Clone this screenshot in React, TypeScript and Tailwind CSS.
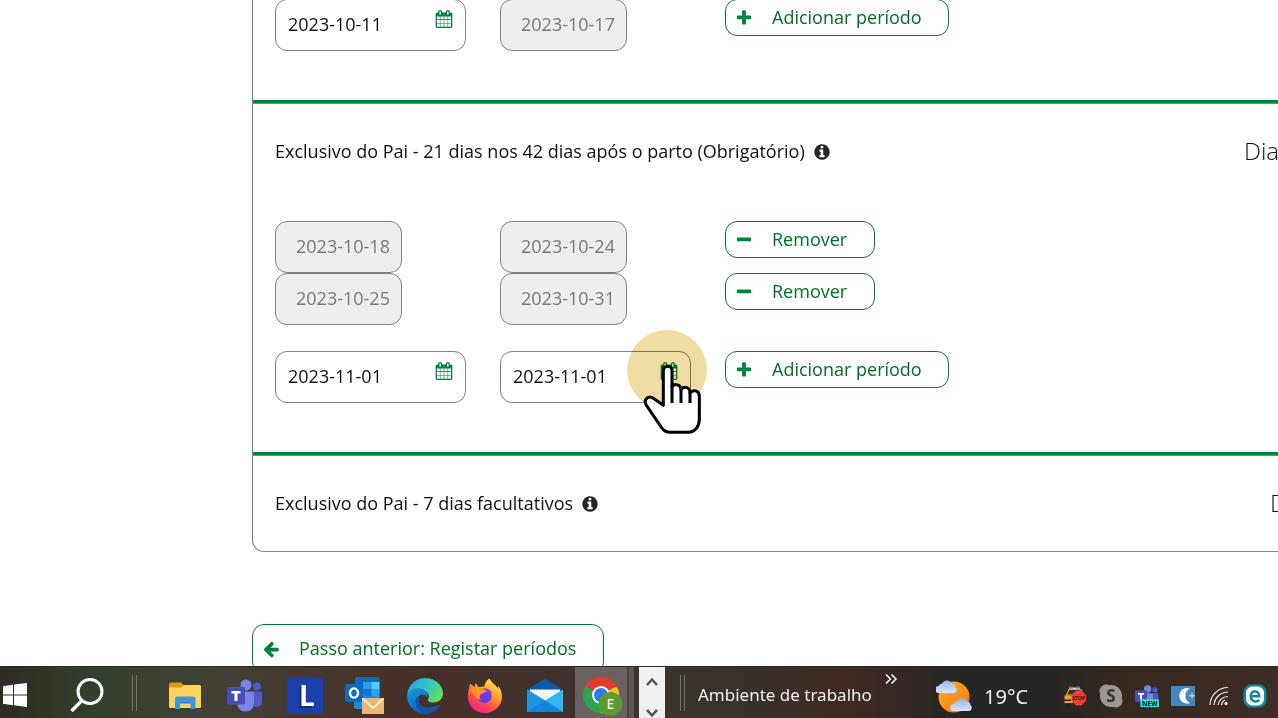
import type { ReactNode } from 'react'

const glyphs = {
  plus: 'M1600 736v192q0 40-28 68t-68 28h-416v416q0 40-28 68t-68 28h-192q-40 0-68-28t-28-68v-416h-416q-40 0-68-28t-28-68v-192q0-40 28-68t68-28h416v-416q0-40 28-68t68-28h192q40 0 68 28t28 68v416h416q40 0 68 28t28 68z',
  minus: 'M1600 736v192q0 40-28 68t-68 28h-1216q-40 0-68-28t-28-68v-192q0-40 28-68t68-28h1216q40 0 68 28t28 68z',
  arrowLeft:
    'M1664 896v128q0 53-32.5 90.5t-84.5 37.5h-704l293 294q38 36 38 90t-38 90l-75 76q-37 37-90 37-52 0-91-37l-651-652q-37-37-37-90 0-52 37-91l651-650q38-38 91-38 52 0 90 38l75 74q38 38 38 91t-38 91l-293 293h704q52 0 84.5 37.5t32.5 90.5z',
  info: 'M1152 1376v-160q0-14-9-23t-23-9h-96v-512q0-14-9-23t-23-9h-320q-14 0-23 9t-9 23v160q0 14 9 23t23 9h96v320h-96q-14 0-23 9t-9 23v160q0 14 9 23t23 9h448q14 0 23-9t9-23zm-128-896v-160q0-14-9-23t-23-9h-192q-14 0-23 9t-9 23v160q0 14 9 23t23 9h192q14 0 23-9t9-23zm640 416q0 209-103 385.5t-279.5 279.5-385.5 103-385.5-103-279.5-279.5-103-385.5 103-385.5 279.5-279.5 385.5-103 385.5 103 279.5 279.5 103 385.5z',
  calendar:
    'M192 1664h288v-288h-288v288zm352 0h320v-288h-320v288zm-352-352h288v-320h-288v320zm352 0h320v-320h-320v320zm-352-384h288v-288h-288v288zm736 736h320v-288h-320v288zm-384-736h320v-288h-320v288zm768 736h288v-288h-288v288zm-384-352h320v-320h-320v320zm-352-864v-288q0-13-9.5-22.5t-22.5-9.5h-64q-13 0-22.5 9.5t-9.5 22.5v288q0 13 9.5 22.5t22.5 9.5h64q13 0 22.5-9.5t9.5-22.5zm736 864h288v-320h-288v320zm-384-384h320v-288h-320v288zm384 0h288v-288h-288v288zm32-480v-288q0-13-9.5-22.5t-22.5-9.5h-64q-13 0-22.5 9.5t-9.5 22.5v288q0 13 9.5 22.5t22.5 9.5h64q13 0 22.5-9.5t9.5-22.5zm384-64v1280q0 52-38 90t-90 38h-1408q-52 0-90-38t-38-90v-1280q0-52 38-90t90-38h128v-96q0-66 47-113t113-47h64q66 0 113 47t47 113v96h384v-96q0-66 47-113t113-47h64q66 0 113 47t47 113v96h128q52 0 90 38t38 90z',
}

function Glyph({ name, className = '' }: { name: keyof typeof glyphs; className?: string }) {
  return (
    <svg viewBox="0 0 1792 1792" className={`size-[18px] shrink-0 fill-current ${className}`} aria-hidden="true">
      <path d={glyphs[name]} />
    </svg>
  )
}

function DateField({ label, value }: { label: string; value: string }) {
  return (
    <div className="flex h-[52px] w-[191px] items-start rounded-xl border border-[#808080] bg-white pr-3 pl-3">
      <input
        type="text"
        aria-label={label}
        defaultValue={value}
        className="h-[50px] w-full min-w-0 bg-transparent pb-0.5 text-[#111] outline-none"
      />
      <button type="button" aria-label={`Abrir calendário: ${label}`} className="mt-2.5 text-[#00843d]">
        <Glyph name="calendar" />
      </button>
    </div>
  )
}

function LockedDate({ label, value }: { label: string; value: string }) {
  return (
    <input
      type="text"
      aria-label={label}
      defaultValue={value}
      disabled
      className="h-[52px] w-[127px] rounded-xl border border-[#808080] bg-[#eee] pb-0.5 pl-5 text-[#777]"
    />
  )
}

interface ActionButtonProps {
  icon: 'plus' | 'minus' | 'arrowLeft'
  className: string
  children: ReactNode
}

function ActionButton({ icon, className, children }: ActionButtonProps) {
  return (
    <button
      type="button"
      className={`flex items-center rounded-xl border border-[#007a2b] bg-white whitespace-nowrap text-[#006f26] ${className}`}
    >
      <Glyph name={icon} className="text-[#00843d]" />
      <span className="pb-0.5">{children}</span>
    </button>
  )
}

function AddButton() {
  return (
    <ActionButton icon="plus" className="h-[37px] w-[224px] gap-[19px] pl-[9px]">
      Adicionar período
    </ActionButton>
  )
}

function RemoveButton() {
  return (
    <ActionButton icon="minus" className="h-[37px] w-[150px] gap-[19px] pl-[9px]">
      Remover
    </ActionButton>
  )
}

function Row({ children }: { children: ReactNode }) {
  return <div className="grid grid-cols-[225px_225px_1fr] items-start">{children}</div>
}

function Divider() {
  return <div className="h-1 border-b border-[#7d8a80] bg-[#00843d]" />
}

function SectionTitle({ title, aside }: { title: string; aside: ReactNode }) {
  return (
    <div className="flex h-9 items-center justify-between">
      <h2 className="flex items-center gap-2 text-[#111]">
        <span className="pb-0.5">{title}</span>
        <Glyph name="info" className="text-[#262626]" />
      </h2>
      {aside}
    </div>
  )
}

// click highlight and hand that sit over the end date field
function Pointer() {
  return (
    <div className="pointer-events-none absolute -top-[21px] left-[127px]">
      <div className="size-20 rounded-full bg-[#f0dc9e] opacity-95 mix-blend-multiply" />
      <svg viewBox="52 360 240 330" className="absolute top-0 left-0 h-[110px] w-20">
        <path
          d="M161 586V482C161 464 187 464 187 482V530C194 520 214 522 214 540C221 526 241 530 241 549C249 537 269 541 269 558V628C269 650 255 667 236 667H182C170 667 162 662 155 652L109 584C101 570 116 554 131 565Z"
          fill="#fff"
          stroke="#000"
          strokeWidth="9"
          strokeLinejoin="round"
        />
        <path d="M187 525V579M214 538V579M241 546V579" fill="none" stroke="#000" strokeWidth="9" />
      </svg>
    </div>
  )
}

function WindowsIcon() {
  return (
    <svg viewBox="0 0 24 24" className="size-6" fill="#fff">
      <path d="M0 3.2 10 1.8V11.4H0zM11 1.6 24 0V11.4H11zM0 12.4H10V22.2L0 20.8zM11 12.4H24V24L11 22.3z" />
    </svg>
  )
}

function SearchIcon() {
  return (
    <svg viewBox="0 0 34 34" className="size-[34px]" fill="none" stroke="#fff" strokeWidth="3">
      <circle cx="20" cy="13.5" r="12" />
      <path d="M12 22.5 1.5 33" strokeWidth="3.4" />
    </svg>
  )
}

function FolderIcon() {
  return (
    <svg viewBox="0 0 32 28" className="h-7 w-8">
      <path d="M0 2q0-1.500 1.500-1.500H12l3 3H30.500q1.500 0 1.500 1.500V10H0z" fill="#d99a18" />
      <path d="M0 5.500H12l3-2.500H30.500q1.500 0 1.500 1.500V24.500q0 1.500-1.500 1.500H1.500Q0 26 0 24.500z" fill="#ffd35c" />
      <path d="M6 27V16.500q0-2 2-2H24.500q2 0 2 2V27H21.500V19.500H11V27z" fill="#3e95da" />
      <path d="M11 19.500H21.500V21.500H11z" fill="#2a7ac0" />
    </svg>
  )
}

function TeamsIcon({ className, badge = false }: { className: string; badge?: boolean }) {
  return (
    <svg viewBox="0 0 36 33" className={className}>
      <circle cx="30" cy="7.500" r="4" fill="#5059c9" />
      <circle cx="19" cy="6" r="5.500" fill="#7b83eb" />
      <path d="M25 12.500H33.500q1.500 0 1.500 1.500V22q0 6-6 6-4 0-5-3z" fill="#5059c9" />
      <path d="M11 12.500H25q2 0 2 2V23q0 9.500-8.500 9.500T10 23z" fill="#7b83eb" />
      <rect y="8" width="18" height="17.500" rx="1.500" fill="#464eb8" />
      <path d="M4.500 12H13.500V14.600H10.500V22H7.500V14.600H4.500z" fill="#fff" />
      {badge && (
        <g>
          <rect x="8" y="21.500" width="28" height="11.500" fill="#20e6e6" />
          <text x="22" y="31" textAnchor="middle" fontSize="10" fontWeight="700" fontFamily="Open Sans, sans-serif">
            NEW
          </text>
        </g>
      )}
    </svg>
  )
}

function LetterIcon() {
  return (
    <span className="flex size-9 items-center justify-center bg-[#1c3fae] pb-0.5 pl-1 font-['Open_Sans',sans-serif] text-[28px] leading-none font-bold text-white [text-shadow:-2px_2px_0_#0b3550]">
      L
    </span>
  )
}

function OutlookIcon() {
  return (
    <svg viewBox="0 0 40 38" className="h-[38px] w-10">
      <path d="M10 1.500Q10 0 11.500 0H33q1.500 0 1.500 1.500V18H10z" fill="#1068b8" />
      <path d="M18 5H26.500V12H18z" fill="#28a0e4" />
      <path d="M26.500 5H34.500V12H26.500z" fill="#50d0f8" />
      <path d="M18 12H26.500V20H18z" fill="#0f78d4" />
      <path d="M26.500 12H34.500V20H26.500z" fill="#28a8ea" />
      <path d="M9 17 35 20V30q0 2-2 2H11q-2 0-2-2z" fill="#1a8cdc" />
      <rect y="7" width="18" height="18" rx="1.500" fill="#0f6cbd" />
      <ellipse cx="9" cy="16" rx="4" ry="4.600" fill="none" stroke="#fff" strokeWidth="2.400" />
      <rect x="17" y="21" width="22" height="16" fill="#ecb876" />
      <path d="M17.500 21.500 28 31 38.500 21.500" fill="none" stroke="#fff" strokeWidth="1.600" />
    </svg>
  )
}

function EdgeIcon() {
  return (
    <svg viewBox="0 0 36 36" className="size-9">
      <defs>
        <linearGradient id="edgeTop" x1="0" x2="1" y1="0.2" y2="0.6">
          <stop offset="0" stopColor="#2aa5e0" />
          <stop offset="0.5" stopColor="#2fc3c8" />
          <stop offset="1" stopColor="#63dc58" />
        </linearGradient>
        <linearGradient id="edgeSide" x1="0" x2="0.6" y1="0" y2="1">
          <stop offset="0" stopColor="#1b9be6" />
          <stop offset="1" stopColor="#0a5cb8" />
        </linearGradient>
      </defs>
      <path d="M.3 16C1.500 6.500 9 0 18 0c10.500 0 18 7.500 18 15.500 0 5.500-4 9-9.500 9-4 0-6.500-1.500-5.500-3 2-3 1-7-4-8.500C10 11 3 12.500.3 16z" fill="url(#edgeTop)" />
      <path d="M.2 16.500C3 10.500 10 9 15.500 11c5 2 6 6 4.500 9 0 0-1-3.500-4.500-3.500-3 0-4.500 3-4 7C12.300 30 18 34.500 23 35.300 10 38.500-1 28 .2 16.500z" fill="url(#edgeSide)" />
      <path d="M12.500 17.500c-3 8 4 14 12 11.500 4-.8 7-2.500 8.500-2 1 .5-2 4.500-8 7.500-7 3-17-3-16.500-11 0-3 2-5 4-6z" fill="#1254a0" />
    </svg>
  )
}

function FirefoxIcon() {
  return (
    <svg viewBox="0 0 36 36" className="size-9">
      <defs>
        <linearGradient id="fox" x1="0.8" x2="0.2" y1="0" y2="1">
          <stop offset="0" stopColor="#fff04a" />
          <stop offset="0.4" stopColor="#ff9a2a" />
          <stop offset="0.7" stopColor="#ff4550" />
          <stop offset="1" stopColor="#f0209c" />
        </linearGradient>
      </defs>
      <path d="M22.500.5c-4 2.500-5 6-5 8L11.500 9 8.500 5 7.500 9 3 5.500C2 11 .5 14 1 20c1 9 8 15 17 15s17-7 17-16c0-5-1.500-9-4-11l.5 3C29 7 25 5.500 22.500.5z" fill="url(#fox)" />
      <circle cx="17.500" cy="18" r="7.200" fill="#6f3be0" />
      <path d="M14 12c4-3 10-1 11 4-3-3-6-2-7 0-2 0-3 2-6 1-1-2 0-4 2-5z" fill="#a238dc" />
      <path d="M3.500 12C8 9.500 12 9.500 14.500 11.500L19 12c-.5 2-2 2.500-4.500 3.500-2 1.500-3 4-.5 6-5 0-7-5-10.500-9.500z" fill="#ff981f" />
    </svg>
  )
}

function MailIcon() {
  return (
    <svg viewBox="0 0 36 34" className="h-[34px] w-9">
      <path d="M0 11 16 .8q2-1.100 4 0L36 11V18H0z" fill="#0a5aa8" />
      <path d="M3 10.500H33V24H3z" fill="#f1f3f5" />
      <path d="M0 10.500 18 21.500 36 10.500V33H0z" fill="#31b8f0" />
      <path d="M0 10.500 18 21.500 36 33H0z" fill="#1c94e0" />
      <path d="M0 33 18 21.500 36 33z" fill="#1583d6" />
    </svg>
  )
}

function ChromeIcon() {
  return (
    <svg viewBox="0 0 40 40" className="size-10">
      <path d="M18 18 2.400 9A18 18 0 0 1 33.600 9z" fill="#e33b2e" />
      <path d="M18 18 33.600 9A18 18 0 0 1 18 36z" fill="#fbc116" />
      <path d="M18 18V36A18 18 0 0 1 2.400 9z" fill="#2da44f" />
      <path d="M18 9.500H33.900" stroke="#e33b2e" strokeWidth="2" />
      <circle cx="18" cy="18" r="9" fill="#fff" />
      <circle cx="18" cy="18" r="7" fill="#2b7de9" />
      <circle cx="27.500" cy="27" r="12" fill="#5f9a35" />
      <text x="27.500" y="32" textAnchor="middle" fontSize="14" fontWeight="600" fill="#e4eedb" fontFamily="Open Sans, sans-serif">
        E
      </text>
    </svg>
  )
}

function WeatherIcon() {
  return (
    <svg viewBox="0 0 36 34" className="h-[34px] w-9">
      <defs>
        <linearGradient id="sun" x1="0" x2="1" y1="0" y2="1">
          <stop offset="0" stopColor="#ffb42a" />
          <stop offset="1" stopColor="#f5740e" />
        </linearGradient>
        <linearGradient id="cloud" x1="0" x2="0" y1="0" y2="1">
          <stop offset="0" stopColor="#8db6ee" />
          <stop offset="1" stopColor="#dbe7f8" />
        </linearGradient>
      </defs>
      <circle cx="18" cy="18" r="15.500" fill="url(#sun)" />
      <path d="M3 14a3.500 3.500 0 0 1-.5-7A5 5 0 0 1 6 4.500 5.500 5.500 0 0 1 15.500 4a4.500 4.500 0 0 1 4 4 3.500 3.500 0 0 1-1 6z" fill="url(#cloud)" />
      <path d="M18 32a3.500 3.500 0 0 1-.5-7A5 5 0 0 1 21 22.500 5.500 5.500 0 0 1 30.500 22a4.500 4.500 0 0 1 4 4 3.500 3.500 0 0 1-1 6z" fill="url(#cloud)" />
    </svg>
  )
}

function TaxiIcon() {
  return (
    <svg viewBox="0 0 24 22" className="h-[22px] w-6">
      <path d="M6 2.500H17V4.500H6z" fill="#dfe3e8" />
      <path d="M6 1.500H10V3.500H6z" fill="#e5452f" />
      <path d="M13 1.500H17V3.500H13z" fill="#3f7fd8" />
      <path d="M6 4.500H18L20.500 10H3.500z" fill="#2b3138" stroke="#f0a428" strokeWidth="1.200" />
      <path d="M1.500 10.500H10V18H1.500z" fill="#f0a428" />
      <path d="M2 18H6.500V20.500H2zM1 14.500H8V16H1z" fill="#222" />
      <path d="M13 5.500H18.500L23 10V16L18.500 20.500H13L8.500 16V10z" fill="#ef3d30" />
      <text x="15.700" y="15" textAnchor="middle" fontSize="5" fontWeight="700" fill="#2a1010" fontFamily="Open Sans, sans-serif">
        STOP
      </text>
    </svg>
  )
}

function SkypeIcon() {
  return (
    <svg viewBox="0 0 24 24" className="size-6">
      <circle cx="7" cy="7" r="6.500" fill="#9c9694" />
      <circle cx="17" cy="17" r="6.500" fill="#9c9694" />
      <circle cx="12" cy="12" r="11" fill="#9c9694" />
      <text x="12" y="18" textAnchor="middle" fontSize="17" fontWeight="700" fill="#38302c" fontFamily="Open Sans, sans-serif">
        S
      </text>
    </svg>
  )
}

function CardIcon() {
  return (
    <svg viewBox="0 0 24 20" className="h-5 w-6">
      <rect width="24" height="20" fill="#4287c0" />
      <path d="M19 2.500a7.800 7.800 0 1 0 0 14.500a8 8 0 0 1 0-14.500z" fill="#fff" />
      <path d="M18 9.700H24M21 7V12.500" stroke="#a9c9e4" strokeWidth="1.500" />
    </svg>
  )
}

function WifiIcon() {
  return (
    <svg viewBox="0 0 20 20" className="size-5" fill="none" stroke="#eee" strokeWidth="1.200">
      <path d="M1 19A18 18 0 0 1 19 1.500M5 19A14 14 0 0 1 19 6M9 19A10 10 0 0 1 19 10.500M12.500 19A6.500 6.500 0 0 1 16 14" />
      <circle cx="17" cy="17.500" r="1.500" fill="#fff" stroke="none" />
    </svg>
  )
}

function EsetIcon() {
  return (
    <svg viewBox="0 0 24 24" className="size-6">
      <rect x="0.500" y="0.500" width="23" height="23" rx="8" fill="#108a98" />
      <rect x="3" y="2.500" width="18" height="19" rx="6.500" fill="#fff" />
      <path d="M7.500 12.300H16.200C16.400 5.500 7.800 5.500 7.800 12.200 7.800 18 13.500 18.500 16.300 15.800" fill="none" stroke="#108a98" strokeWidth="2.500" />
    </svg>
  )
}

const apps = [
  { name: 'Explorador de Ficheiros', icon: <FolderIcon /> },
  { name: 'Teams', icon: <TeamsIcon className="h-[33px] w-9" /> },
  { name: 'L', icon: <LetterIcon /> },
  { name: 'Outlook', icon: <OutlookIcon /> },
  { name: 'Edge', icon: <EdgeIcon /> },
  { name: 'Firefox', icon: <FirefoxIcon /> },
  { name: 'Correio', icon: <MailIcon /> },
]

const tray = [
  { name: 'Trânsito', icon: <TaxiIcon /> },
  { name: 'Skype', icon: <SkypeIcon /> },
  { name: 'Teams novo', icon: <TeamsIcon className="h-[22px] w-6" badge /> },
  { name: 'Cartão', icon: <CardIcon /> },
  { name: 'Rede', icon: <WifiIcon /> },
  { name: 'Antivírus', icon: <EsetIcon /> },
]

function Grip() {
  return <span className="h-9 w-[5px] shrink-0 border-x border-[#77736c]" />
}

function Taskbar() {
  return (
    <footer className="z-10 flex h-[52px] shrink-0 items-center border-t border-[#2a2a22] bg-[linear-gradient(90deg,#2f2a22_0%,#333f2d_7%,#424136_16%,#45372f_26%,#482f29_33%,#41322d_42%,#3a342c_53%,#38312a_59%,#402a25_66%,#262525_75%,#262524_82%,#37291f_89%,#3f2d27_100%)] font-['Noto_Sans',sans-serif] text-[#f0f0f0]">
      <button type="button" aria-label="Iniciar" className="flex w-[57px] shrink-0 pt-1 pl-[3px]">
        <WindowsIcon />
      </button>
      <button type="button" aria-label="Procurar" className="mr-[15px] flex w-[60px] shrink-0 justify-center pt-1">
        <SearchIcon />
      </button>
      <Grip />
      <nav aria-label="Aplicações" className="ml-[18px] flex h-full shrink-0">
        {apps.map((app) => (
          <button key={app.name} type="button" aria-label={app.name} className="flex w-[60px] items-center justify-center pt-1.5">
            {app.icon}
          </button>
        ))}
        <button type="button" aria-label="Chrome" className="flex w-[52px] items-center justify-center bg-[#6a625e] pt-2 pl-1">
          <ChromeIcon />
        </button>
      </nav>
      <span className="mr-[5px] h-full w-[7px] shrink-0 border-l-2 border-[#4a423e] bg-[#5f5753]" />
      <div className="flex h-full w-[26px] shrink-0 flex-col items-center justify-between bg-[#f0f0f0] pt-2.5 text-[#505050]">
        <button type="button" aria-label="Subir">
          <svg viewBox="0 0 12 9" className="h-[9px] w-3" fill="none" stroke="currentColor" strokeWidth="2.500">
            <path d="M1 8 6 2.500 11 8" />
          </svg>
        </button>
        <button type="button" aria-label="Descer">
          <svg viewBox="0 0 12 9" className="h-[9px] w-3" fill="none" stroke="currentColor" strokeWidth="2.500">
            <path d="M1 1 6 6.500 11 1" />
          </svg>
        </button>
      </div>
      <div className="ml-[15px] flex shrink-0 items-center gap-[13px]">
        <Grip />
        <span className="pt-1.5 text-[17px] whitespace-nowrap">Ambiente de trabalho</span>
        <button type="button" aria-label="Mais" className="mb-7">
          <svg viewBox="0 0 12 10" className="h-2.5 w-3" fill="none" stroke="#fff" strokeWidth="1.500">
            <path d="M1 .5 5.500 5 1 9.500M6.500 .5 11 5 6.500 9.500" />
          </svg>
        </button>
      </div>
      <div className="ml-auto flex shrink-0 items-center gap-3 pt-1.5">
        <WeatherIcon />
        <span className="w-[73px] pt-0.5 text-xl whitespace-nowrap">19°C</span>
      </div>
      <div className="flex shrink-0 pt-1.5 pr-[5px]">
        {tray.map((item) => (
          <button key={item.name} type="button" aria-label={item.name} className="flex w-9 items-center justify-center">
            {item.icon}
          </button>
        ))}
      </div>
    </footer>
  )
}

export default function App() {
  return (
    <div className="flex h-screen flex-col overflow-hidden bg-white font-['Open_Sans',sans-serif] text-lg">
      <main className="min-h-0 flex-1 overflow-hidden pl-[252px]">
        <div className="-mt-px rounded-bl-xl border-b border-l border-[#808080]">
          <section className="pb-[49px] pl-[22px]">
            <Row>
              <DateField label="Data de início" value="2023-10-11" />
              <LockedDate label="Data de fim" value="2023-10-17" />
              <AddButton />
            </Row>
          </section>
          <Divider />
          <section className="pt-[30px] pb-[49px] pl-[22px]">
            <SectionTitle
              title="Exclusivo do Pai - 21 dias nos 42 dias após o parto (Obrigatório)"
              aside={<span className="w-[34px] overflow-hidden pb-0.5 text-2xl font-light text-[#111]">Dia</span>}
            />
            <div className="mt-[51px]">
              <Row>
                <LockedDate label="Início do período 1" value="2023-10-18" />
                <LockedDate label="Fim do período 1" value="2023-10-24" />
                <RemoveButton />
              </Row>
              <Row>
                <LockedDate label="Início do período 2" value="2023-10-25" />
                <LockedDate label="Fim do período 2" value="2023-10-31" />
                <RemoveButton />
              </Row>
            </div>
            <div className="mt-[26px]">
              <Row>
                <DateField label="Início do novo período" value="2023-11-01" />
                <div className="relative">
                  <DateField label="Fim do novo período" value="2023-11-01" />
                  <Pointer />
                </div>
                <AddButton />
              </Row>
            </div>
          </section>
          <Divider />
          <section className="pt-[30px] pb-[29px] pl-[22px]">
            <SectionTitle
              title="Exclusivo do Pai - 7 dias facultativos"
              aside={<span className="w-2 overflow-hidden pb-0.5 text-2xl font-light text-[#111]">D</span>}
            />
          </section>
        </div>
        <div className="mt-[72px]">
          <ActionButton icon="arrowLeft" className="h-[50px] w-[352px] gap-[19px] pl-[9px]">
            Passo anterior: Registar períodos
          </ActionButton>
        </div>
      </main>
      <Taskbar />
    </div>
  )
}
